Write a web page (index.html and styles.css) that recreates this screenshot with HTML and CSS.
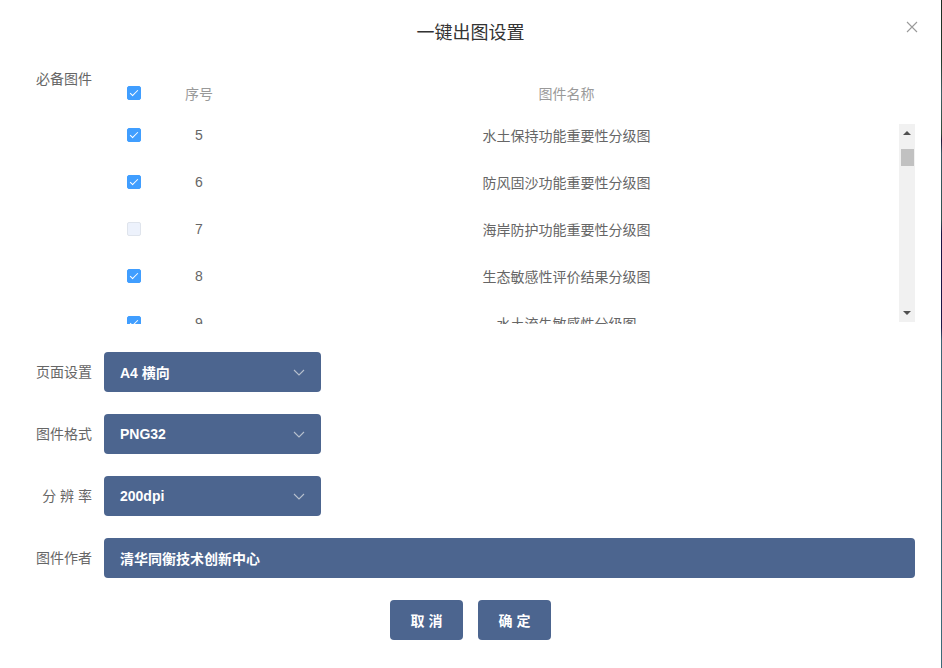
FILE: index.html
```html
<!DOCTYPE html>
<html lang="zh-CN">
<head>
    <meta charset="UTF-8">
    <meta name="viewport" content="width=device-width, initial-scale=1.0">
    <title>一键出图设置</title>
    <link rel="stylesheet" href="styles.css">
</head>
<body>
    <div class="modal">
        <div class="modal-header">
            <span class="modal-title">一键出图设置</span>
            <span class="modal-close">
                <svg width="12" height="12" viewBox="0 0 12 12"><path d="M1 1L11 11M11 1L1 11" stroke="#9a9a9a" stroke-width="1.1" fill="none"/></svg>
            </span>
        </div>

        <div class="modal-body">
            <div class="form-item form-item--top">
                <label class="form-label">必备图件</label>
                <div class="map-table">
                    <div class="table-head">
                        <div class="col-check"><span class="checkbox checked"></span></div>
                        <div class="col-no">序号</div>
                        <div class="col-name">图件名称</div>
                        <div class="gutter"></div>
                    </div>
                    <div class="table-body">
                        <div class="table-rows">
                            <div class="table-row">
                                <div class="col-check"><span class="checkbox checked"></span></div>
                                <div class="col-no">5</div>
                                <div class="col-name">水土保持功能重要性分级图</div>
                            </div>
                            <div class="table-row">
                                <div class="col-check"><span class="checkbox checked"></span></div>
                                <div class="col-no">6</div>
                                <div class="col-name">防风固沙功能重要性分级图</div>
                            </div>
                            <div class="table-row">
                                <div class="col-check"><span class="checkbox"></span></div>
                                <div class="col-no">7</div>
                                <div class="col-name">海岸防护功能重要性分级图</div>
                            </div>
                            <div class="table-row">
                                <div class="col-check"><span class="checkbox checked"></span></div>
                                <div class="col-no">8</div>
                                <div class="col-name">生态敏感性评价结果分级图</div>
                            </div>
                            <div class="table-row">
                                <div class="col-check"><span class="checkbox checked"></span></div>
                                <div class="col-no">9</div>
                                <div class="col-name">水土流失敏感性分级图</div>
                            </div>
                        </div>
                        <div class="scrollbar">
                            <span class="arrow-up"></span>
                            <span class="thumb"></span>
                            <span class="arrow-down"></span>
                        </div>
                    </div>
                </div>
            </div>

            <div class="form-item">
                <label class="form-label">页面设置</label>
                <div class="select">
                    <span>A4 横向</span>
                    <svg width="12" height="7" viewBox="0 0 12 7"><path d="M1 1L6 6L11 1" stroke="#b7c0ce" stroke-width="1.1" fill="none"/></svg>
                </div>
            </div>

            <div class="form-item">
                <label class="form-label">图件格式</label>
                <div class="select">
                    <span>PNG32</span>
                    <svg width="12" height="7" viewBox="0 0 12 7"><path d="M1 1L6 6L11 1" stroke="#b7c0ce" stroke-width="1.1" fill="none"/></svg>
                </div>
            </div>

            <div class="form-item">
                <label class="form-label">分 辨 率</label>
                <div class="select">
                    <span>200dpi</span>
                    <svg width="12" height="7" viewBox="0 0 12 7"><path d="M1 1L6 6L11 1" stroke="#b7c0ce" stroke-width="1.1" fill="none"/></svg>
                </div>
            </div>

            <div class="form-item">
                <label class="form-label">图件作者</label>
                <div class="input">清华同衡技术创新中心</div>
            </div>

            <div class="modal-footer">
                <button class="btn">取消</button>
                <button class="btn">确定</button>
            </div>
        </div>
    </div>
    <div class="edge"></div>
</body>
</html>
```

FILE: styles.css
```css
body {
    margin: 0;
    height: 668px;
    display: flex;
    background: #fff;
    font-family: "Liberation Sans", "Noto Sans CJK SC", sans-serif;
    color: #666;
    overflow: hidden;
}
.modal {
    flex: 1;
    background: #fff;
}
.edge {
    width: 1px;
    background: linear-gradient(to bottom,
        #1d2a22 0%, #223a2c 9%, #3f6066 14%, #2d4a3a 20%, #1f1a3a 21%, #3a5c66 23%,
        #2f5050 33%, #1a1545 35%, #1c1848 49%, #3c6474 51%, #3d6a78 100%);
}

.modal-header {
    height: 60px;
    display: flex;
    align-items: center;
    justify-content: center;
    position: relative;
}
.modal-title {
    font-size: 18px;
    color: #333;
    margin-top: 1px;
}
.modal-close {
    position: absolute;
    right: 23px;
    top: 21px;
    display: flex;
}

.modal-body {
    padding: 11px 26px 0 0;
}
.form-item {
    display: flex;
    align-items: center;
    margin-bottom: 22px;
}
.form-item--top {
    align-items: flex-start;
    margin-bottom: 28px;
}
.form-label {
    width: 92px;
    flex-shrink: 0;
    text-align: right;
    padding-right: 12px;
    font-size: 14px;
    line-height: 16px;
    color: #666;
}

.map-table {
    flex: 1;
    margin-top: 3px;
    font-size: 14px;
}
.table-head {
    display: flex;
    align-items: center;
    height: 38px;
    color: #999;
}
.table-body {
    display: flex;
    height: 212px;
}
.table-rows {
    flex: 1;
    overflow: hidden;
}
.table-row {
    display: flex;
    align-items: center;
    height: 47px;
    color: #666;
}
.table-row:first-child {
    margin-top: -1px;
}
.col-check {
    width: 60px;
    display: flex;
    justify-content: center;
}
.col-no {
    width: 70px;
    text-align: center;
}
.col-name {
    flex: 1;
    text-align: center;
}
.gutter {
    width: 16px;
}

.checkbox {
    width: 14px;
    height: 14px;
    box-sizing: border-box;
    border-radius: 2px;
    background: #edf2fc;
    border: 1px solid #dfe4ec;
    position: relative;
}
.checkbox.checked {
    background: #409eff;
    border-color: #409eff;
}
.checkbox.checked::after {
    content: '';
    position: absolute;
    left: 4px;
    top: 1px;
    width: 3px;
    height: 7px;
    border: 1px solid #fff;
    border-top: 0;
    border-left: 0;
    transform: rotate(45deg);
}

.scrollbar {
    width: 16px;
    margin-top: 12px;
    height: 198px;
    background: #f1f1f1;
    position: relative;
}
.arrow-up,
.arrow-down {
    position: absolute;
    left: 4px;
    width: 0;
    height: 0;
    border-left: 4px solid transparent;
    border-right: 4px solid transparent;
}
.arrow-up {
    top: 7px;
    border-bottom: 4px solid #505050;
}
.arrow-down {
    bottom: 7px;
    border-top: 4px solid #505050;
}
.thumb {
    position: absolute;
    left: 2px;
    top: 25px;
    width: 13px;
    height: 17px;
    background: #c1c1c1;
}

.select,
.input {
    height: 40px;
    box-sizing: border-box;
    background: #4c658f;
    border-radius: 4px;
    color: #fff;
    font-size: 14px;
    font-weight: bold;
    padding: 0 16px;
    display: flex;
    align-items: center;
}
.select {
    width: 217px;
    justify-content: space-between;
}
.input {
    flex: 1;
}

.modal-footer {
    display: flex;
    justify-content: center;
    gap: 15px;
    padding-left: 26px;
}
.btn {
    width: 73px;
    height: 40px;
    border: none;
    border-radius: 4px;
    background: #4c658f;
    color: #fff;
    font-family: inherit;
    font-size: 14px;
    font-weight: bold;
    letter-spacing: 4px;
    text-indent: 4px;
    cursor: pointer;
}
```
